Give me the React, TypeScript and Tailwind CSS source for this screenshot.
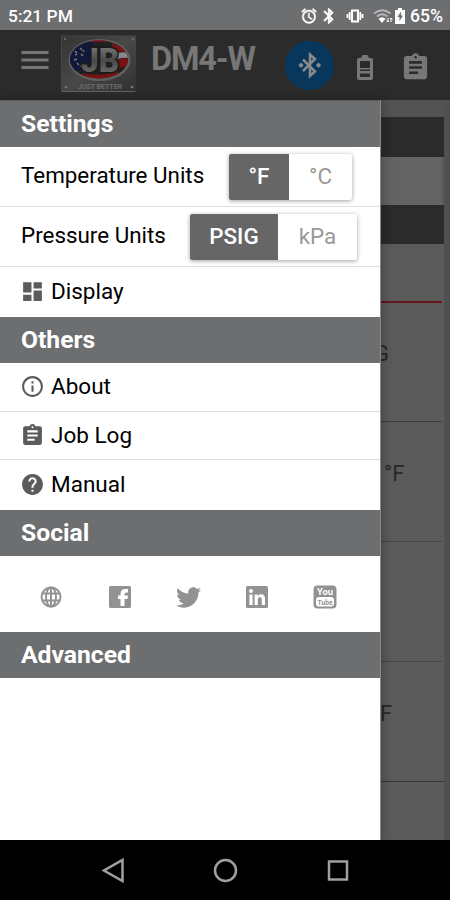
import { useState } from 'react'
import type { ReactNode } from 'react'
import { MdAlarm, MdAssignment, MdBluetooth, MdDashboard, MdHelp, MdInfoOutline, MdMenu } from 'react-icons/md'
import { FaTwitter } from 'react-icons/fa'

export default function App() {
  const [temp, setTemp] = useState('°F')
  const [pressure, setPressure] = useState('PSIG')

  return (
    <div className="flex h-[900px] w-[450px] flex-col overflow-hidden bg-black font-[Roboto,sans-serif] text-black">
      <StatusBar />
      <Header />
      <div className="flex h-[740px]">
        <aside className="z-10 flex w-[381px] shrink-0 flex-col border-r border-[#898989] bg-white shadow-[2px_0_10px_rgba(0,0,0,0.25)]">
          <div className="h-px shrink-0 bg-[#57585a]" />
          <SectionTitle>Settings</SectionTitle>
          <div className="flex h-[60px] items-center border-b border-[#dfdfdf] pl-[21px] text-[22.4px]">
            <span className="w-[208px] pb-px">Temperature Units</span>
            <Toggle options={['°F', '°C']} widths={['w-[60px]', 'w-[63px]']} value={temp} onChange={setTemp} />
          </div>
          <div className="flex h-[60px] items-center border-b border-[#dfdfdf] pl-[21px] text-[22.4px]">
            <span className="w-[169px] pb-px">Pressure Units</span>
            <Toggle options={['PSIG', 'kPa']} widths={['w-[88px]', 'w-[79px]']} value={pressure} onChange={setPressure} />
          </div>
          <MenuRow height="h-[50px]" icon={<MdDashboard />} label="Display" />
          <SectionTitle>Others</SectionTitle>
          <MenuRow height="h-[49px]" icon={<MdInfoOutline />} label="About" line />
          <MenuRow height="h-[48px]" icon={<MdAssignment />} label="Job Log" line />
          <MenuRow height="h-[50px]" icon={<MdHelp />} label="Manual" />
          <SectionTitle>Social</SectionTitle>
          <div className="flex h-[76px] items-center pt-[6px] pl-[17px] text-[#929292]">
            {[<Globe />, <Facebook />, <FaTwitter size={25} />, <LinkedIn />, <YouTube />].map((icon, i) => (
              <button key={i} className="flex w-[68.5px] justify-center">{icon}</button>
            ))}
          </div>
          <SectionTitle>Advanced</SectionTitle>
        </aside>
        <Gauges />
      </div>
      <NavBar />
    </div>
  )
}

function StatusBar() {
  return (
    <div className="flex h-[30px] shrink-0 items-center bg-[#6d6e70] pt-[2px] pr-[7px] pl-2 text-white">
      <span className="flex-1 text-[17.4px] font-medium">5:21 PM</span>
      <MdAlarm size={18} stroke="white" strokeWidth="0.6" className="[&>path:first-child]:stroke-none" />
      <MdBluetooth size={18} stroke="white" strokeWidth="1" className="ml-[2px] [&>path:first-child]:stroke-none" />
      <svg width="18" height="14" viewBox="0 0 18 14" fill="none" stroke="white" className="ml-[8px]">
        <path d="M6 1.5h6v11H6Z" strokeWidth="2" />
        <path d="M3.7 3v8M14.3 3v8M1.500 5v4M16.500 5v4" strokeWidth="1.8" />
      </svg>
      <svg width="20" height="18" viewBox="0 0 20 18" fill="none" className="ml-[9px]">
        <path d="M1 6.5Q9 0 17.5 6.5M4 9.5Q9 5 14.5 9.5" stroke="#b5b6b7" strokeWidth="2" />
        <path d="M5.5 11.8Q9 8.5 12.5 11.8L9 16Z" fill="white" />
        <path d="M15 11v4m-1.5-1.5L15 15l1-1M18 15v-4m-1 1 1-1 1.5 1.5" stroke="white" />
      </svg>
      <svg width="12" height="18" viewBox="0 0 12 18" className="ml-px">
        <path d="M1 3h3V1h4v2h3v14H1Z" fill="white" />
        <path d="M7 4.5 3.5 10h2v4L9 8.5H7Z" fill="#6d6e70" />
      </svg>
      <span className="ml-[4px] text-[17.6px] font-medium">65%</span>
    </div>
  )
}

function Header() {
  return (
    <header className="flex h-[70px] shrink-0 items-center bg-[#2b2b2b] text-[#777777]">
      <MdMenu size={36} className="mb-[11px] ml-[17px]" />
      <Logo />
      <h1 className="mb-[11px] ml-[15px] w-[134px] text-[32.6px] leading-none font-bold tracking-[-1.2px]">DM4-W</h1>
      <div className="flex h-[49px] w-[49px] items-center justify-center rounded-full bg-[#07375c]">
        <svg width="24" height="28" viewBox="0 0 24 28" fill="none" stroke="#8a8a8a" strokeWidth="2.5">
          <path d="m5 8.5 12 12-5 4.500V3.500l5 4.500-12 12" />
          <path d="m3 11.5 2.7 2.7L3 16.900.3 14.200ZM20.500 11.500l2.700 2.700-2.700 2.700-2.700-2.700Z" fill="#8a8a8a" stroke="none" />
        </svg>
      </div>
      <svg width="16" height="26" viewBox="0 0 16 26" className="mt-[5px] ml-[23px]">
        <path fill="#777777" d="M2 3h2.5V1.5Q4.5 0 6 0h4q1.5 0 1.5 1.5V3H14q2 0 2 2v18q0 2-2 2H2q-2 0-2-2V5Q0 3 2 3Z" />
        <path fill="#2b2b2b" d="M3 6h10v7H3ZM3 14.5h10V16H3ZM3 18.5h10V22H3Z" />
      </svg>
      <MdAssignment size={31} className="mt-[4px] ml-[27px]" />
    </header>
  )
}

function Logo() {
  return (
    <svg width="75" height="58" viewBox="0 0 75 58" className="mb-[3px] ml-[8px]">
      <defs>
        <linearGradient id="plate" x1="0" y1="0" x2="1" y2="1">
          <stop stopColor="#343434" />
          <stop offset="0.5" stopColor="#484848" />
          <stop offset="1" stopColor="#303030" />
        </linearGradient>
        <linearGradient id="letters" x1="0" y1="0" x2="0" y2="1">
          <stop stopColor="#858585" />
          <stop offset="0.5" stopColor="#4a4a4a" />
          <stop offset="1" stopColor="#777777" />
        </linearGradient>
        <clipPath id="oval"><ellipse cx="38" cy="24.5" rx="29" ry="19" /></clipPath>
      </defs>
      <path d="M0 1h75v56H0Z" fill="url(#plate)" />
      <path d="M.5 57V1H74" fill="none" stroke="#484848" />
      <path d="M1 56.5h73" stroke="#626262" />
      <ellipse cx="38.5" cy="25" rx="31" ry="21" fill="#606060" />
      <g clipPath="url(#oval)">
        <path d="M8 4h60v42H8Z" fill="#202020" />
        <path d="M8 4h25l-6 30-19 3Z" fill="#10193a" />
        <path d="M29 4h24v3H29ZM51 8q6 4 17 2v8q-8-3-17 0ZM54 26q6-4 14-2v8q-8-1-16 3ZM22 38q14 4 35-1v9H20Z" fill="#791215" />
        <path d="M54 19q6-3 14-1v5q-8-1-14 2Z" fill="#898989" />
        <path d="m14 16 2 2m3-5 2 2m-8 10 3-1m4-5 2 2m-6 7 2 2m-4-10 2-1m6-4 1 2m-4 14 3 1" stroke="#777" strokeWidth="1.5" />
      </g>
      <text x="20" y="37" textLength="38" lengthAdjust="spacingAndGlyphs" fontFamily="Roboto, sans-serif" fontSize="33" fontWeight="900" stroke="#1b1b1b" strokeWidth="3" paintOrder="stroke" fill="url(#letters)">JB</text>
      <text x="17" y="54" textLength="44" lengthAdjust="spacingAndGlyphs" fontFamily="Roboto, sans-serif" fontSize="6.5" fontWeight="700" fill="#6c6c6c">JUST BETTER</text>
      <g fill="#777777">
        <circle cx="4" cy="4" r="1" /><circle cx="72" cy="4" r="1" />
        <circle cx="5" cy="52" r="1.3" /><circle cx="71" cy="52" r="1.3" />
      </g>
    </svg>
  )
}

function SectionTitle({ children }: { children: ReactNode }) {
  return (
    <h2 className="flex h-[46px] shrink-0 items-center bg-[#6d6e70] pl-[21px] text-[24.7px] font-bold text-white">
      {children}
    </h2>
  )
}

function MenuRow({ icon, label, height, line }: { icon: ReactNode; label: string; height: string; line?: boolean }) {
  return (
    <button className={`flex shrink-0 items-center pl-[20px] text-left ${height} ${line ? 'border-b border-[#dfdfdf]' : ''}`}>
      <span className="mb-px text-[25px] text-[#5b5b5b]">{icon}</span>
      <span className="ml-[6px] text-[22.5px]">{label}</span>
    </button>
  )
}

function Toggle({ options, widths, value, onChange }: {
  options: string[]
  widths: string[]
  value: string
  onChange: (v: string) => void
}) {
  return (
    <div className="mt-px flex h-[46px] overflow-hidden rounded-[2px] bg-white shadow-[0_1px_4px_rgba(0,0,0,0.38)]">
      {options.map((o, i) => (
        <button
          key={o}
          onClick={() => onChange(o)}
          className={`${widths[i]} ${value === o ? 'bg-[#666666] font-medium text-white' : 'text-[#999999]'}`}>
          {o}
        </button>
      ))}
    </div>
  )
}

function Globe() {
  return (
    <svg width="22" height="22" viewBox="0 0 22 22" fill="none" stroke="currentColor" strokeWidth="1.9">
      <circle cx="11" cy="11" r="9.5" />
      <ellipse cx="11" cy="11" rx="5" ry="9.5" />
      <path d="M11 1.5v19M2.5 7.5h17M2.5 14.5h17" />
    </svg>
  )
}

function Facebook() {
  return (
    <svg width="22" height="22" viewBox="0 0 22 22">
      <rect width="22" height="22" rx="1.5" fill="currentColor" />
      <path d="M11.5 20v-7H9V9.5h2.5V8q0-5 5-5H19v3.5h-1.5q-2 0-2 2v1H19l-.5 3.500h-3v7Z" fill="white" />
    </svg>
  )
}

function LinkedIn() {
  return (
    <svg width="22" height="22" viewBox="0 0 22 22">
      <rect width="22" height="22" rx="1.5" fill="currentColor" />
      <circle cx="5" cy="5" r="2" fill="white" />
      <path d="M3.4 8.5h3.2V19H3.4ZM8.6 8.5h3.1v1.4q1-1.7 3.3-1.7 4 0 4 4.6V19h-3.2v-5.5q0-2.5-1.8-2.5-2.2 0-2.2 2.5V19H8.6Z" fill="white" />
    </svg>
  )
}

function YouTube() {
  return (
    <svg width="24" height="24" viewBox="0 0 24 24" fontFamily="Roboto, sans-serif" fontWeight="700" className="overflow-visible">
      <rect x="0.5" y="0.5" width="23" height="23" rx="4" fill="currentColor" />
      <text x="4" y="10" fontSize="9.5" textLength="16" lengthAdjust="spacingAndGlyphs" fill="white">You</text>
      <rect x="3" y="12" width="18" height="9.5" rx="3" fill="white" />
      <text x="4.5" y="20" fontSize="8" textLength="15" lengthAdjust="spacingAndGlyphs" fill="currentColor">Tube</text>
    </svg>
  )
}

// Dimmed gauge screen showing beside the open drawer
function Gauges() {
  return (
    <main className="flex h-[740px] flex-1 bg-[#505050] text-[22px] text-[#292929]">
      <div className="flex w-[63px] flex-col bg-[#5b5b5b]">
        <div className="h-[17px] bg-[#535353]" />
        <div className="h-[40px] bg-[#2b2b2b]" />
        <div className="mr-[2px] h-[48px] bg-[#636363]" />
        <div className="h-[39px] bg-[#2b2b2b]" />
        <div className="mr-[2px] h-[59px] border-b-2 border-[#651719]" />
        <div className="mr-[2px] flex h-[119px] items-center border-b border-[#3c3c3c] pb-[18px]">
          <span className="-ml-[7px]">G</span>
        </div>
        <div className="mr-[2px] flex h-[120px] items-center border-b border-[#454545] pb-[16px] pl-[3px]">°F</div>
        <div className="mr-[2px] h-[120px] border-b border-[#454545]" />
        <div className="flex h-[120px] items-center border-b border-[#353535] pb-[16px]">
          <span className="-ml-px">F</span>
        </div>
      </div>
    </main>
  )
}

function NavBar() {
  return (
    <nav className="flex h-[60px] shrink-0 items-center justify-center gap-[88px] bg-black">
      <svg width="24" height="26" viewBox="0 0 24 26" fill="none" stroke="#a0a0a0" strokeWidth="2.5">
        <path d="M21.5 3v21L3 13.5Z" />
      </svg>
      <svg width="26" height="26" viewBox="0 0 26 26" fill="none" stroke="#a0a0a0" strokeWidth="2.5">
        <circle cx="12.5" cy="13.5" r="10.5" />
      </svg>
      <svg width="22" height="22" viewBox="0 0 22 22" fill="none" stroke="#a0a0a0" strokeWidth="2.5">
        <path d="M2 2.5h18v18H2Z" />
      </svg>
    </nav>
  )
}
